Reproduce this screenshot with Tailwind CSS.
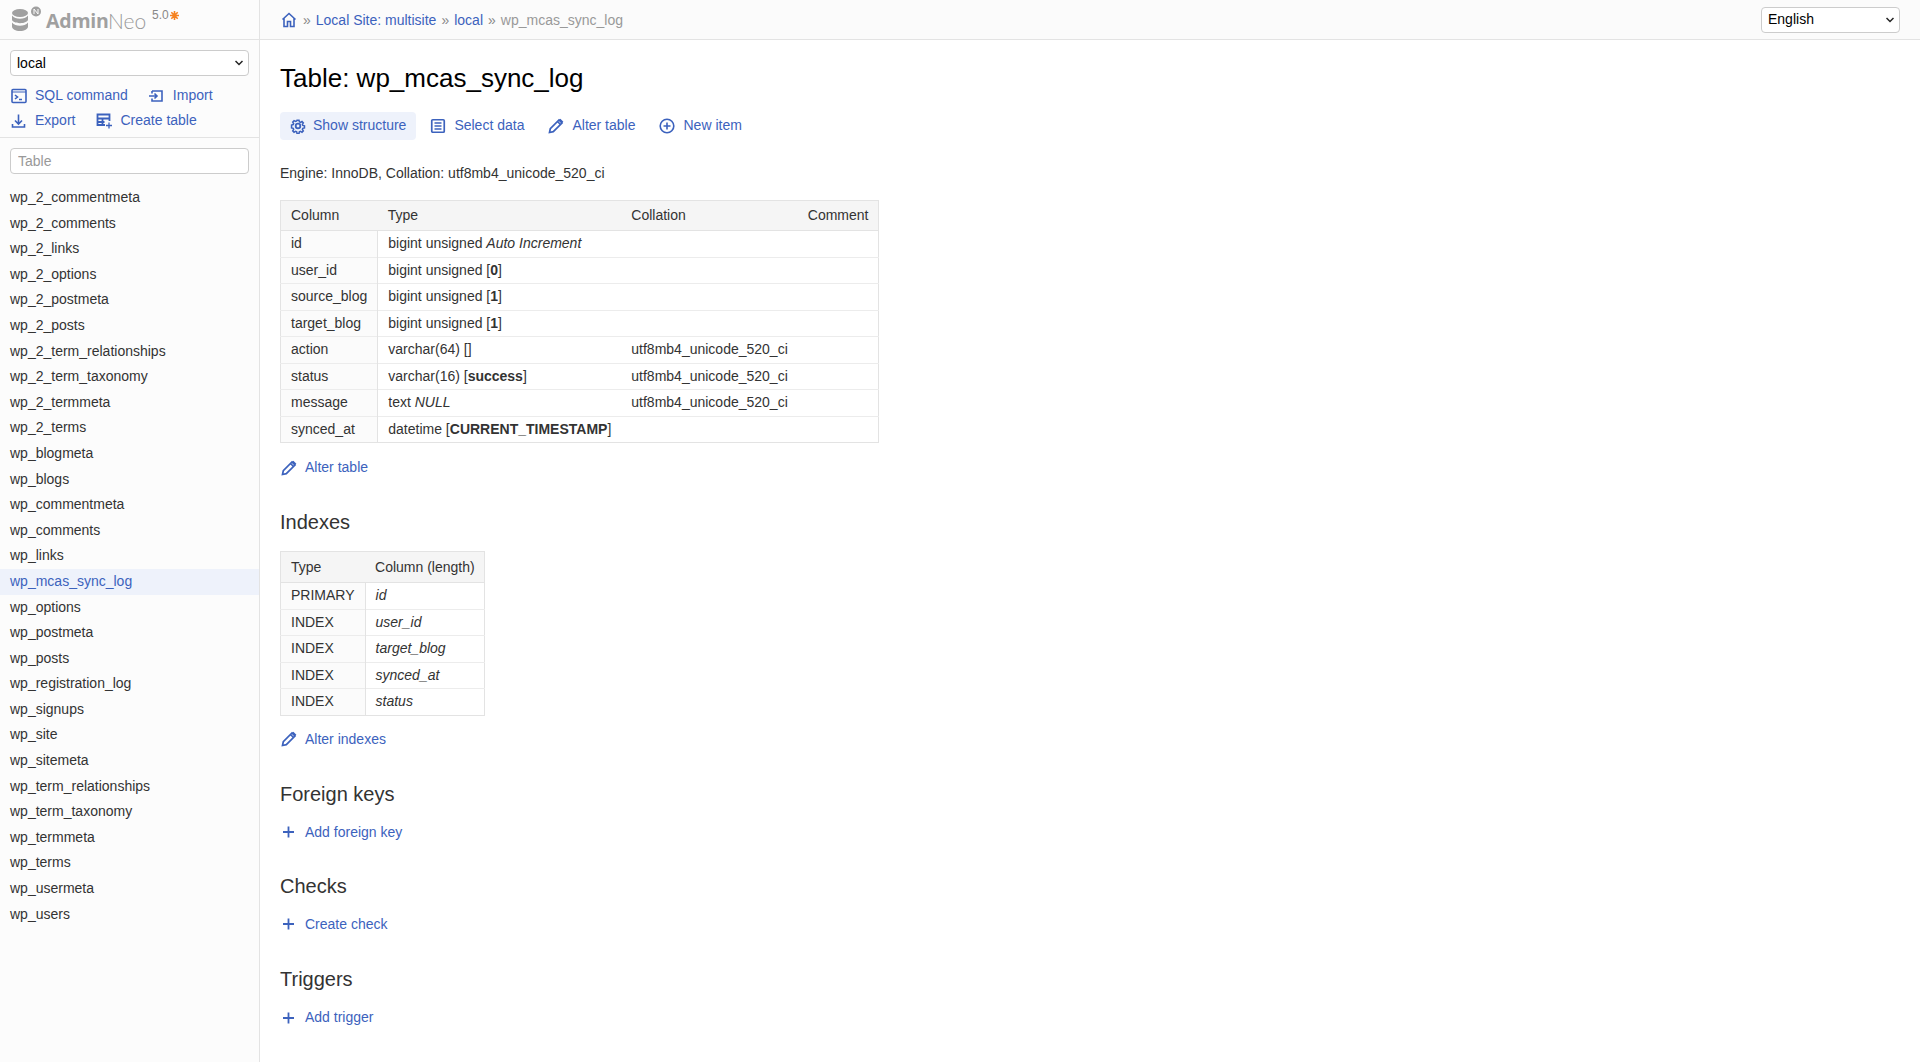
<!DOCTYPE html>
<html lang="en">
<head>
<meta charset="utf-8">
<title>AdminNeo</title>
<script src="https://cdn.jsdelivr.net/npm/@tailwindcss/browser@4"></script>
</head>
<body class="font-['Liberation_Sans',Arial,sans-serif] text-[14px] leading-[17.5px] text-[#333] bg-white">
<div class="flex min-h-[1062px] h-[1062px] overflow-hidden">
  <aside class="w-[260px] shrink-0 bg-[#fcfcfc] border-r border-[#e3e3e3]">
    <div class="h-[40px] border-b border-[#e3e3e3] pl-3 flex items-start relative">
      <svg class="absolute left-[12px] top-[5px]" width="32" height="27" viewBox="0 0 32 27"><g fill="#a0a0a0"><ellipse cx="8" cy="8" rx="8" ry="4"/><path d="M0 10.500c1.800 2.200 4.800 3.300 8 3.300s6.200-1.100 8-3.300v4c0 2-3.600 3.700-8 3.700s-8-1.700-8-3.700z"/><path d="M0 17.500c1.800 2.200 4.800 3.300 8 3.300s6.200-1.100 8-3.300v4c0 2.400-3.600 4.500-8 4.500s-8-2.100-8-4.500z"/></g><circle cx="24" cy="6.500" r="5" fill="#a0a0a0"/><path d="M22 9v-5l4 5v-5" fill="none" stroke="#fcfcfc" stroke-width="1"/></svg>
      <span class="absolute left-[46px] top-[9px] font-['Open_Sans',sans-serif] text-[19.500px] leading-[24px] font-bold text-[#a0a0a0] tracking-[-0.2px]">Admin</span>
      <span class="absolute left-[108px] top-[9px] font-['Lato',sans-serif] text-[21px] leading-[24px] font-light text-[#999]">Neo</span>
      <span class="absolute left-[152px] top-[8px] text-[12px] leading-[15px] text-[#888]">5.0</span>
      <svg class="absolute left-[170px] top-[11px]" width="9" height="9" viewBox="0 0 9 9"><g stroke="#f58220" stroke-width="1.600"><path d="M4.500 0v9M0 4.500h9M1.300 1.300l6.400 6.400M7.700 1.300l-6.400 6.400"/></g></svg>
    </div>
    <div class="px-[10px] pt-[10px] pb-[3px] border-b border-[#e3e3e3]">
      <div class="relative w-[239px]">
        <select class="block appearance-none w-[239px] h-[26px] pl-[6px] pr-1 bg-white border border-[#ccc] rounded-[4px] text-[14px] leading-[17px] text-black"><option>local</option></select>
        <svg class="absolute right-[6px] top-[10px] pointer-events-none" width="8" height="6" viewBox="0 0 8 6" fill="none" stroke="#222" stroke-width="1.500"><path d="M.5 1l3.500 3.500L7.500 1"/></svg>
      </div>
      <div class="flex items-center mt-[7px] h-[25px]">
        <a class="flex items-center gap-[8px] ml-[1px] text-[#3c62bd]" href="#"><svg width="16" height="16" viewBox="0 0 16 16" fill="none" stroke="#3c62bd" stroke-width="1.600"><rect x="1" y="1.500" width="14" height="13" rx="1"/><path d="M1 4h14" stroke-width="1"/><path d="M4 7l2.500 2L4 11M8 11.500h3"/></svg>SQL command</a>
        <a class="flex items-center gap-[9px] ml-[21px] text-[#3c62bd]" href="#"><svg width="15" height="16" viewBox="0 0 15 16" fill="none" stroke="#3c62bd" stroke-width="1.600"><path d="M3 3h10v10H3v-2.500M3 5.500V3M0 8h8M5.500 5.500L8 8l-2.500 2.500"/></svg>Import</a>
      </div>
      <div class="flex items-center h-[25.500px]">
        <a class="flex items-center gap-[9px] ml-[1px] text-[#3c62bd]" href="#"><svg width="15" height="16" viewBox="0 0 15 16" fill="none" stroke="#3c62bd" stroke-width="1.600"><path d="M7.500 1.500v9M4 7.500l3.500 3.500L11 7.500M1.500 11v3h12v-3"/></svg>Export</a>
        <a class="flex items-center gap-[8px] ml-[21px] text-[#3c62bd]" href="#"><svg width="16" height="16" viewBox="0 0 16 16" fill="none" stroke="#3c62bd" stroke-width="1.500"><path d="M9 12H1.500V1.500h12V8M1.500 5.500h12M1.500 9h7M6.500 5.500V12" stroke-width="1.800"/><path d="M13 9.500v6M10 12.500h6" stroke-width="1.300"/></svg>Create table</a>
      </div>
    </div>
    <div class="px-[10px] pt-[10px]">
      <input class="block w-[239px] h-[26px] px-[7px] bg-white border border-[#ccc] rounded-[4px] text-[14px] placeholder:text-[#999]" placeholder="Table">
    </div>
    <ul class="mt-[11.500px] leading-[17.6px]">
      <li class="px-[10px] py-[4px]">wp_2_commentmeta</li>
      <li class="px-[10px] py-[4px]">wp_2_comments</li>
      <li class="px-[10px] py-[4px]">wp_2_links</li>
      <li class="px-[10px] py-[4px]">wp_2_options</li>
      <li class="px-[10px] py-[4px]">wp_2_postmeta</li>
      <li class="px-[10px] py-[4px]">wp_2_posts</li>
      <li class="px-[10px] py-[4px]">wp_2_term_relationships</li>
      <li class="px-[10px] py-[4px]">wp_2_term_taxonomy</li>
      <li class="px-[10px] py-[4px]">wp_2_termmeta</li>
      <li class="px-[10px] py-[4px]">wp_2_terms</li>
      <li class="px-[10px] py-[4px]">wp_blogmeta</li>
      <li class="px-[10px] py-[4px]">wp_blogs</li>
      <li class="px-[10px] py-[4px]">wp_commentmeta</li>
      <li class="px-[10px] py-[4px]">wp_comments</li>
      <li class="px-[10px] py-[4px]">wp_links</li>
      <li class="px-[10px] py-[4px] bg-[#eef2fb] text-[#3c62bd]">wp_mcas_sync_log</li>
      <li class="px-[10px] py-[4px]">wp_options</li>
      <li class="px-[10px] py-[4px]">wp_postmeta</li>
      <li class="px-[10px] py-[4px]">wp_posts</li>
      <li class="px-[10px] py-[4px]">wp_registration_log</li>
      <li class="px-[10px] py-[4px]">wp_signups</li>
      <li class="px-[10px] py-[4px]">wp_site</li>
      <li class="px-[10px] py-[4px]">wp_sitemeta</li>
      <li class="px-[10px] py-[4px]">wp_term_relationships</li>
      <li class="px-[10px] py-[4px]">wp_term_taxonomy</li>
      <li class="px-[10px] py-[4px]">wp_termmeta</li>
      <li class="px-[10px] py-[4px]">wp_terms</li>
      <li class="px-[10px] py-[4px]">wp_usermeta</li>
      <li class="px-[10px] py-[4px]">wp_users</li>
    </ul>
  </aside>
  <main class="flex-1 min-w-0">
    <div class="h-[40px] bg-[#fbfbfb] border-b border-[#e3e3e3] pl-[21px] pr-[20px] flex items-center justify-between">
      <div class="flex items-center text-[#999] pt-[2px]">
        <svg class="-mt-[2px]" width="16" height="16" viewBox="0 0 16 16" fill="none" stroke="#3c62bd" stroke-width="1.600"><path d="M1.500 7.500L8 1.500l6.500 6M3 6.500V14.500h3.500V9.500h3V14.500H13V6.500"/></svg>
        <span class="ml-[6px] mr-[5px] text-[#888]">»</span><a class="text-[#3c62bd]" href="#">Local Site: multisite</a>
        <span class="mx-[5px] text-[#888]">»</span><a class="text-[#3c62bd]" href="#">local</a>
        <span class="mx-[5px] text-[#888]">»</span><span>wp_mcas_sync_log</span>
      </div>
      <div class="relative w-[139px]">
        <select class="block appearance-none w-[139px] h-[26px] pl-[6px] pr-1 bg-white border border-[#ccc] rounded-[4px] text-[14px] leading-[17px] text-black"><option>English</option></select>
        <svg class="absolute right-[6px] top-[10px] pointer-events-none" width="8" height="6" viewBox="0 0 8 6" fill="none" stroke="#222" stroke-width="1.500"><path d="M.5 1l3.500 3.500L7.500 1"/></svg>
      </div>
    </div>
    <div class="pl-[20px]">
      <h1 class="mt-[21px] text-[26px] leading-[35px] font-normal text-black">Table: wp_mcas_sync_log</h1>
      <div class="flex items-center mt-[16px] h-[28px] text-[#3c62bd]">
        <a class="flex items-center gap-[7px] h-[28px] pl-[10px] pr-[10px] bg-[#eef2fb] rounded-[4px]" href="#"><svg width="16" height="16" viewBox="0 0 16 16" fill="none" stroke="#3c62bd" stroke-width="1.800"><circle cx="8" cy="8" r="2.300"/><path d="M6.800 1h2.400l.4 2 1.300.6 1.800-1 1.600 1.700-1.100 1.700.5 1.300 2 .5v2.400l-2 .5-.5 1.300 1.100 1.700-1.600 1.700-1.800-1-1.300.6-.4 2H6.800l-.4-2-1.300-.6-1.800 1-1.600-1.700 1.100-1.700-.5-1.300-2-.5V6.800l2-.5.5-1.300-1.100-1.700 1.600-1.700 1.800 1 1.300-.6z" transform="translate(1.300 1.300) scale(.84)"/></svg>Show structure</a>
        <a class="flex items-center gap-[7px] h-[28px] ml-[5px] pl-[10px] pr-[10px]" href="#"><svg class="-ml-[1px] mr-[1px]" width="16" height="16" viewBox="0 0 16 16" fill="none" stroke="#3c62bd" stroke-width="1.700"><rect x="1.750" y="1.750" width="12.500" height="12.500" rx="1"/><path d="M4.500 5h7M4.500 8h7M4.500 11h7"/></svg>Select data</a>
        <a class="flex items-center gap-[7px] h-[28px] ml-[5px] pl-[10px] pr-[10px]" href="#"><svg class="-ml-[1px] mr-[1px]" width="16" height="16" viewBox="0 0 16 16" fill="none" stroke="#3c62bd" stroke-width="1.700"><path d="M1.500 14.500l.8-3.800L11 2l3 3-8.700 8.700zM9.500 3.500l3 3"/><path d="M11.500 1.500l3 3" stroke-width="2.400"/></svg>Alter table</a>
        <a class="flex items-center gap-[7px] h-[28px] ml-[5px] pl-[10px] pr-[10px]" href="#"><svg class="-ml-[1px] mr-[1px]" width="16" height="16" viewBox="0 0 16 16" fill="none" stroke="#3c62bd" stroke-width="1.600"><circle cx="8" cy="8" r="6.800"/><path d="M8 4.500v7M4.500 8h7"/></svg>New item</a>
      </div>
      <p class="mt-[25px]">Engine: InnoDB, Collation: utf8mb4_unicode_520_ci</p>
      <table class="mt-[17px] border-collapse border border-[#e3e3e3]">
        <thead><tr class="bg-[#f5f5f5] border-b border-[#e3e3e3]">
          <th class="font-normal text-left px-[10px] pt-[6px] pb-[6px]">Column</th><th class="font-normal text-left px-[10px] pt-[6px] pb-[6px]">Type</th><th class="font-normal text-left px-[10px] pt-[6px] pb-[6px]">Collation</th><th class="font-normal text-left px-[10px] pt-[6px] pb-[6px]">Comment</th>
        </tr></thead>
        <tbody>
          <tr class="border-b border-[#ececec]"><td class="bg-[#fbfbfb] border-r border-[#e3e3e3] px-[10px] py-[4px]">id</td><td class="px-[10px] py-[4px]">bigint unsigned <i>Auto Increment</i></td><td class="px-[10px] py-[4px]"></td><td class="px-[10px] py-[4px]"></td></tr>
          <tr class="border-b border-[#ececec]"><td class="bg-[#fbfbfb] border-r border-[#e3e3e3] px-[10px] py-[4px]">user_id</td><td class="px-[10px] py-[4px]">bigint unsigned [<b>0</b>]</td><td class="px-[10px] py-[4px]"></td><td class="px-[10px] py-[4px]"></td></tr>
          <tr class="border-b border-[#ececec]"><td class="bg-[#fbfbfb] border-r border-[#e3e3e3] px-[10px] py-[4px]">source_blog</td><td class="px-[10px] py-[4px]">bigint unsigned [<b>1</b>]</td><td class="px-[10px] py-[4px]"></td><td class="px-[10px] py-[4px]"></td></tr>
          <tr class="border-b border-[#ececec]"><td class="bg-[#fbfbfb] border-r border-[#e3e3e3] px-[10px] py-[4px]">target_blog</td><td class="px-[10px] py-[4px]">bigint unsigned [<b>1</b>]</td><td class="px-[10px] py-[4px]"></td><td class="px-[10px] py-[4px]"></td></tr>
          <tr class="border-b border-[#ececec]"><td class="bg-[#fbfbfb] border-r border-[#e3e3e3] px-[10px] py-[4px]">action</td><td class="px-[10px] py-[4px]">varchar(64) []</td><td class="px-[10px] py-[4px]">utf8mb4_unicode_520_ci</td><td class="px-[10px] py-[4px]"></td></tr>
          <tr class="border-b border-[#ececec]"><td class="bg-[#fbfbfb] border-r border-[#e3e3e3] px-[10px] py-[4px]">status</td><td class="px-[10px] py-[4px]">varchar(16) [<b>success</b>]</td><td class="px-[10px] py-[4px]">utf8mb4_unicode_520_ci</td><td class="px-[10px] py-[4px]"></td></tr>
          <tr class="border-b border-[#ececec]"><td class="bg-[#fbfbfb] border-r border-[#e3e3e3] px-[10px] py-[4px]">message</td><td class="px-[10px] py-[4px]">text <i>NULL</i></td><td class="px-[10px] py-[4px]">utf8mb4_unicode_520_ci</td><td class="px-[10px] py-[4px]"></td></tr>
          <tr><td class="bg-[#fbfbfb] border-r border-[#e3e3e3] px-[10px] py-[4px]">synced_at</td><td class="px-[10px] py-[4px]">datetime [<b>CURRENT_TIMESTAMP</b>]</td><td class="px-[10px] py-[4px]"></td><td class="px-[10px] py-[4px]"></td></tr>
        </tbody>
      </table>
      <a class="flex items-center gap-[8px] mt-[16px] pl-[1px] text-[#3c62bd]" href="#"><svg width="16" height="16" viewBox="0 0 16 16" fill="none" stroke="#3c62bd" stroke-width="1.700"><path d="M1.500 14.500l.8-3.800L11 2l3 3-8.700 8.700zM9.500 3.500l3 3"/><path d="M11.500 1.500l3 3" stroke-width="2.400"/></svg>Alter table</a>
      <h2 class="mt-[33px] text-[20px] leading-[25px] font-normal">Indexes</h2>
      <table class="mt-[16px] border-collapse border border-[#e3e3e3]">
        <thead><tr class="bg-[#f5f5f5] border-b border-[#e3e3e3]">
          <th class="font-normal text-left pl-[10px] pr-[10px] pt-[7px] pb-[6px]">Type</th><th class="font-normal text-left pl-[10px] pr-[9px] pt-[7px] pb-[6px]">Column (length)</th>
        </tr></thead>
        <tbody>
          <tr class="border-b border-[#ececec]"><td class="bg-[#fbfbfb] border-r border-[#e3e3e3] px-[10px] py-[4px]">PRIMARY</td><td class="px-[10px] py-[4px]"><i>id</i></td></tr>
          <tr class="border-b border-[#ececec]"><td class="bg-[#fbfbfb] border-r border-[#e3e3e3] px-[10px] py-[4px]">INDEX</td><td class="px-[10px] py-[4px]"><i>user_id</i></td></tr>
          <tr class="border-b border-[#ececec]"><td class="bg-[#fbfbfb] border-r border-[#e3e3e3] px-[10px] py-[4px]">INDEX</td><td class="px-[10px] py-[4px]"><i>target_blog</i></td></tr>
          <tr class="border-b border-[#ececec]"><td class="bg-[#fbfbfb] border-r border-[#e3e3e3] px-[10px] py-[4px]">INDEX</td><td class="px-[10px] py-[4px]"><i>synced_at</i></td></tr>
          <tr><td class="bg-[#fbfbfb] border-r border-[#e3e3e3] px-[10px] py-[4px]">INDEX</td><td class="px-[10px] py-[4px]"><i>status</i></td></tr>
        </tbody>
      </table>
      <a class="flex items-center gap-[8px] mt-[15px] pl-[1px] text-[#3c62bd]" href="#"><svg width="16" height="16" viewBox="0 0 16 16" fill="none" stroke="#3c62bd" stroke-width="1.700"><path d="M1.500 14.500l.8-3.800L11 2l3 3-8.700 8.700zM9.500 3.500l3 3"/><path d="M11.500 1.500l3 3" stroke-width="2.400"/></svg>Alter indexes</a>
      <h2 class="mt-[33.500px] text-[20px] leading-[25px] font-normal">Foreign keys</h2>
      <a class="flex items-center gap-[9px] mt-[17px] pl-[1px] text-[#3c62bd]" href="#"><svg width="15" height="16" viewBox="0 0 15 16" fill="none" stroke="#3c62bd" stroke-width="1.800"><path d="M7.500 2.500v11M2 8h11"/></svg>Add foreign key</a>
      <h2 class="mt-[32.500px] text-[20px] leading-[25px] font-normal">Checks</h2>
      <a class="flex items-center gap-[9px] mt-[17px] pl-[1px] text-[#3c62bd]" href="#"><svg width="15" height="16" viewBox="0 0 15 16" fill="none" stroke="#3c62bd" stroke-width="1.800"><path d="M7.500 2.500v11M2 8h11"/></svg>Create check</a>
      <h2 class="mt-[34px] text-[20px] leading-[25px] font-normal">Triggers</h2>
      <a class="flex items-center gap-[9px] mt-[17px] pl-[1px] text-[#3c62bd]" href="#"><svg width="15" height="16" viewBox="0 0 15 16" fill="none" stroke="#3c62bd" stroke-width="1.800"><path d="M7.500 2.500v11M2 8h11"/></svg>Add trigger</a>
    </div>
  </main>
</div>
</body>
</html>
